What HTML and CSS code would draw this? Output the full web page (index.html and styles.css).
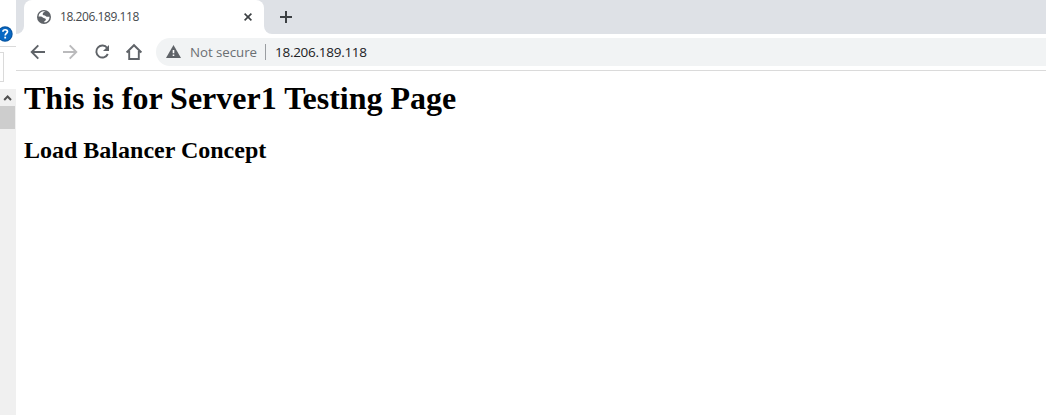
FILE: index.html
```html
<!DOCTYPE html>
<html lang="en">
<head>
<meta charset="utf-8">
<title>18.206.189.118</title>
<link rel="stylesheet" href="styles.css">
</head>
<body>
<aside class="side">
  <div class="side-head">
    <svg class="help" width="13" height="16" viewBox="0 0 13 16"><circle cx="5" cy="8" r="7.7" fill="#0754a0"/><circle cx="5" cy="8" r="6.6" fill="#0868c3"/><path d="M2.9 5.7C3 3.1 7.5 3.1 7.5 5.6 7.5 7.3 5.2 7.3 5.2 9.5" fill="none" stroke="#fff" stroke-width="1.7"/><path d="M4.3 10.7h1.8v1.8H4.3z" fill="#fff"/></svg>
  </div>
  <div class="side-box"></div>
  <div class="scrollbar">
    <svg class="up" width="16" height="17" viewBox="0 0 16 17"><path d="M4.2 11 7.6 7.5 11 11" fill="none" stroke="#505050" stroke-width="2"/></svg>
    <div class="thumb"></div>
  </div>
</aside>
<main class="browser">
  <div class="tabs">
    <div class="tab">
      <svg class="globe" width="14" height="14" viewBox="0 0 14 14"><circle cx="7" cy="7" r="7" fill="#5f6368"/><path d="M8.600 1.600C7.200 2 6.200 2.600 5.800 3.600c-.3 1 .2 1.600 1.200 1.700 1.100.1 1.400.8 2.200 1.200.8.500 2 .2 3.300.2A5.500 5.500 0 0 1 7.400 12.500V11c1.100-.3 1.700-1 1.300-1.900C8.200 8 6.900 8.300 5.800 7.400 4.700 6.600 3 6.600 1.500 6.600A5.500 5.500 0 0 1 8.600 1.600z" fill="#fff"/></svg>
      <span class="tab-title">18.206.189.118</span>
      <svg class="close" width="8" height="8" viewBox="0 0 8 8"><path d="M.6.6l6.800 6.800M7.400.6.6 7.400" stroke="#3c4043" stroke-width="1.600"/></svg>
    </div>
    <svg class="plus" width="12" height="12" viewBox="0 0 12 12"><path d="M6 0v12M0 6h12" stroke="#3c4043" stroke-width="2"/></svg>
  </div>
  <div class="toolbar">
    <svg class="nav" width="120" height="18" viewBox="0 0 120 18" fill="none" stroke="#5f6368" stroke-width="1.900">
      <path d="M17 9H4M10.300 2.400 3.700 9l6.600 6.600"/>
      <path d="M35 9h13M41.700 2.400 48.300 9l-6.600 6.600" stroke="#bababc"/>
      <path d="M79.200 5A6 6 0 1 0 79.800 11"/>
      <path d="M81 2v6h-6z" fill="#5f6368" stroke="none"/>
      <path d="M98.600 9.500 106 2.200l7.400 7.300M101.200 8v8h9.600V8"/>
    </svg>
    <div class="address">
      <svg class="warn" width="15" height="13" viewBox="0 0 15 13"><path d="M7.500 0 15 13H0z" fill="#5f6368"/><path d="M6.700 5h1.600v3.300H6.700zM6.700 9.500h1.600V11H6.700z" fill="#fff"/></svg>
      <span class="status">Not secure</span>
      <span class="divider"></span>
      <span class="url">18.206.189.118</span>
    </div>
  </div>
  <div class="page">
    <h1>This is for Server1 Testing Page</h1>
    <h2>Load Balancer Concept</h2>
  </div>
</main>
</body>
</html>
```
FILE: styles.css
```css
* { box-sizing: border-box; }
body { margin: 0; width: 1046px; height: 415px; display: flex; overflow: hidden; background: #fff; font-family: "Open Sans", "Noto Sans", sans-serif; }
svg { display: block; flex: none; }
.side { width: 16px; flex: none; display: flex; flex-direction: column; }
.side-head { height: 47px; padding-top: 26px; border-bottom: 1px solid #dadada; }
.side-box { width: 4px; height: 30px; margin: 5px 0 7px; border: 1px solid #dadada; border-left: 0; }
.scrollbar { flex: 1; background: #f0f0f0; }
.thumb { width: 15px; height: 23px; background: #cdcdcd; }
.browser { flex: 1; display: flex; flex-direction: column; }
.tabs { height: 34px; display: flex; position: relative; background: linear-gradient(#fff, #fff) 0 100% / 256px 8px no-repeat, #dee1e6; }
/* curved feet on either side of the active tab */
.tabs::before, .tabs::after { content: ""; position: absolute; bottom: 0; height: 8px; background: #dee1e6; }
.tabs::before { left: 0; width: 8px; border-bottom-right-radius: 8px; }
.tabs::after { left: 248px; width: 10px; border-bottom-left-radius: 8px; }
.tab { width: 240px; height: 34px; margin-left: 8px; padding: 0 12px 0 13px; display: flex; align-items: center; background: #fff; border-radius: 8px 8px 0 0; }
.tab-title { margin-left: 9px; font-size: 12px; line-height: 16px; letter-spacing: -0.43px; color: #45494d; }
.close { margin-left: auto; }
.plus { margin: 11px 0 0 16px; }
.toolbar { height: 37px; display: flex; align-items: center; padding: 0 0 1px 12px; border-bottom: 1px solid #dadada; }
.address { margin-left: 8px; flex: 1; height: 28px; padding-left: 11px; display: flex; align-items: center; background: #f1f3f4; border-radius: 14px 0 0 14px; }
.warn { margin-left: -1px; }
.status { margin-left: 9px; width: 67px; font-size: 13.3px; line-height: 18px; letter-spacing: -0.05px; color: #6b6f73; white-space: nowrap; }
.divider { width: 1px; height: 16px; margin: 0 9px 0 8px; background: #9a9da1; }
.url { font-size: 13.5px; line-height: 18px; letter-spacing: -0.27px; color: #202124; }
.page { padding: 9px 8px 8px; font-family: "Liberation Serif", serif; color: #000; }
h1, h2 { margin: 0; white-space: nowrap; }
h1 { font-size: 32px; line-height: 37px; }
h2 { margin-top: 20px; font-size: 24px; line-height: 27px; }
```
